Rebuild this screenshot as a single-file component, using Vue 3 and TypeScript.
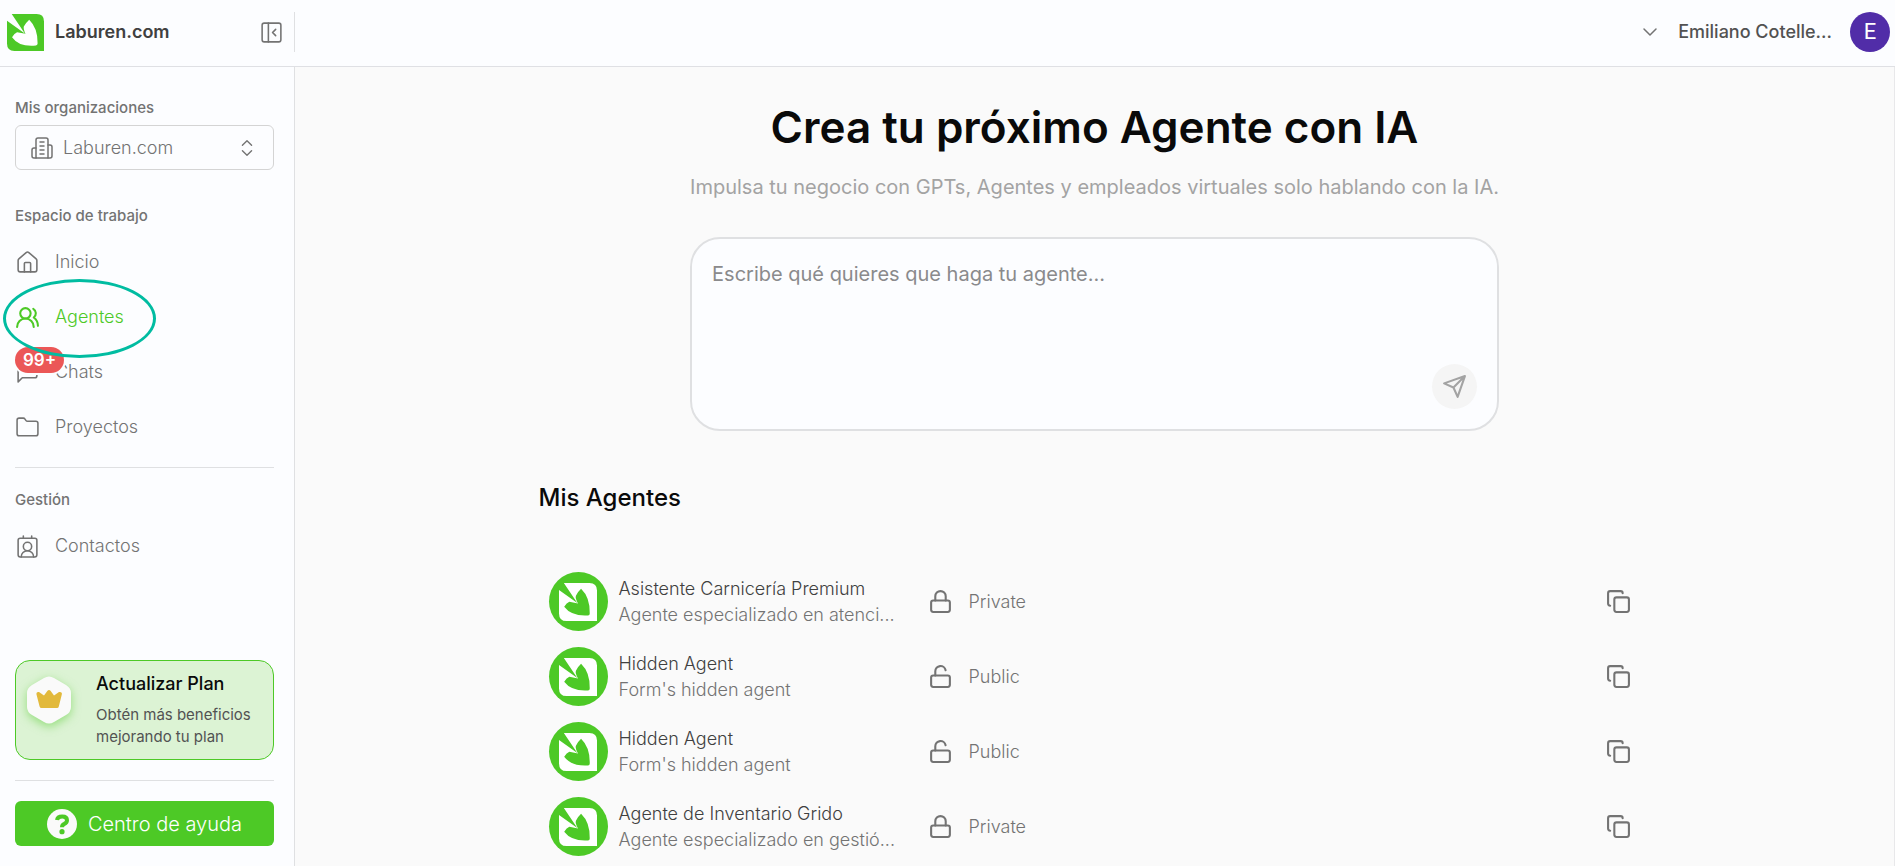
<script setup lang="ts">
import { ref } from 'vue'

interface Shape {
  d: string[]
  circle?: [number, number, number]
  rect?: [number, number, number, number]
}

interface NavItem {
  label: string
  icon: string
  active?: boolean
  badge?: string
}

interface Agent {
  name: string
  description: string
  visibility: 'Private' | 'Public'
}

const icons: Record<string, Shape> = {
  home: {
    d: [
      'M15 21v-8a1 1 0 0 0-1-1h-4a1 1 0 0 0-1 1v8',
      'M3 10a2 2 0 0 1 .709-1.528l7-5.999a2 2 0 0 1 2.582 0l7 5.999A2 2 0 0 1 21 10v9a2 2 0 0 1-2 2H5a2 2 0 0 1-2-2z',
    ],
  },
  users: {
    d: ['M18 21a8 8 0 0 0-16 0', 'M22 20c0-3.37-2-6.5-4-8a5 5 0 0 0-.45-8.3'],
    circle: [10, 8, 5],
  },
  chat: { d: ['M21 15a2 2 0 0 1-2 2H7l-4 4V5a2 2 0 0 1 2-2h14a2 2 0 0 1 2 2z'] },
  folder: {
    d: ['M20 20a2 2 0 0 0 2-2V8a2 2 0 0 0-2-2h-7.9a2 2 0 0 1-1.69-.9L9.6 3.9A2 2 0 0 0 7.93 3H4a2 2 0 0 0-2 2v13a2 2 0 0 0 2 2Z'],
  },
  contact: {
    d: ['M16 2v2', 'M17.915 22a6 6 0 0 0-12 0', 'M8 2v2'],
    circle: [12, 12, 4],
    rect: [3, 4, 18, 18],
  },
}

const workspace: NavItem[] = [
  { label: 'Inicio', icon: 'home' },
  { label: 'Agentes', icon: 'users', active: true },
  { label: 'Chats', icon: 'chat', badge: '99+' },
  { label: 'Proyectos', icon: 'folder' },
]

const management: NavItem[] = [{ label: 'Contactos', icon: 'contact' }]

const agents: Agent[] = [
  { name: 'Asistente Carnicería Premium', description: 'Agente especializado en atenci...', visibility: 'Private' },
  { name: 'Hidden Agent', description: "Form's hidden agent", visibility: 'Public' },
  { name: 'Hidden Agent', description: "Form's hidden agent", visibility: 'Public' },
  { name: 'Agente de Inventario Grido', description: 'Agente especializado en gestió...', visibility: 'Private' },
]

const organization = ref('Laburen.com')
const prompt = ref('')
</script>

<template>
  <div class="shell">
    <header class="topbar">
      <div class="brand">
        <svg class="brand-logo" viewBox="0 0 110 110" aria-hidden="true">
          <path class="logo-green" d="M14 0H88Q110 0 110 22V110H22Q0 110 0 88V20L53 58Z" />
          <path class="logo-white" d="M66 17Q92 42 91 88Q91 93 86 94Q36 99 15 69Q22 57 30 54L55 59Q48 44 50 37Q57 25 66 17Z" />
        </svg>
        <span class="brand-name">Laburen.com</span>
        <button class="icon-button" type="button" aria-label="Contraer menú">
          <svg class="icon" viewBox="0 0 24 24" aria-hidden="true">
            <rect x="3" y="3" width="18" height="18" rx="2" />
            <path d="M9 3v18M16 15l-3-3 3-3" />
          </svg>
        </button>
      </div>
      <button class="account" type="button">
        <svg class="icon account-chevron" viewBox="0 0 24 24" aria-hidden="true"><path d="m6 9 6 6 6-6" /></svg>
        <span class="account-name">Emiliano Cotelle...</span>
        <span class="account-avatar">E</span>
      </button>
    </header>

    <div class="body">
      <aside class="sidebar">
        <label class="section-label" for="organization">Mis organizaciones</label>
        <div class="select-box">
          <svg class="icon select-icon" viewBox="0 0 24 24" aria-hidden="true">
            <path d="M6 22V4a2 2 0 0 1 2-2h8a2 2 0 0 1 2 2v18Z" />
            <path d="M6 12H4a2 2 0 0 0-2 2v6a2 2 0 0 0 2 2h2" />
            <path d="M18 9h2a2 2 0 0 1 2 2v9a2 2 0 0 1-2 2h-2" />
            <path d="M10 6h4M10 10h4M10 14h4M10 18h4" />
          </svg>
          <select id="organization" v-model="organization">
            <option>Laburen.com</option>
          </select>
          <svg class="icon select-arrows" viewBox="0 0 24 24" aria-hidden="true">
            <path d="m7 15 5 5 5-5M7 9l5-5 5 5" />
          </svg>
        </div>

        <p class="section-label workspace-label">Espacio de trabajo</p>
        <nav class="nav" aria-label="Espacio de trabajo">
          <a v-for="item in workspace" :key="item.label" href="#" class="nav-item" :class="{ active: item.active }">
            <svg class="icon" viewBox="0 0 24 24" aria-hidden="true">
              <circle v-if="icons[item.icon].circle" :cx="icons[item.icon].circle![0]" :cy="icons[item.icon].circle![1]" :r="icons[item.icon].circle![2]" />
              <path v-for="d in icons[item.icon].d" :key="d" :d="d" />
            </svg>
            <span>{{ item.label }}</span>
            <span v-if="item.badge" class="badge">{{ item.badge }}</span>
            <span v-if="item.active" class="marker" aria-hidden="true"></span>
          </a>
        </nav>
        <hr class="divider" />

        <p class="section-label management-label">Gestión</p>
        <nav class="nav" aria-label="Gestión">
          <a v-for="item in management" :key="item.label" href="#" class="nav-item">
            <svg class="icon" viewBox="0 0 24 24" aria-hidden="true">
              <rect v-if="icons[item.icon].rect" :x="icons[item.icon].rect![0]" :y="icons[item.icon].rect![1]" :width="icons[item.icon].rect![2]" :height="icons[item.icon].rect![3]" rx="2" />
              <circle v-if="icons[item.icon].circle" :cx="icons[item.icon].circle![0]" :cy="icons[item.icon].circle![1]" :r="icons[item.icon].circle![2]" />
              <path v-for="d in icons[item.icon].d" :key="d" :d="d" />
            </svg>
            <span>{{ item.label }}</span>
          </a>
        </nav>

        <div class="sidebar-foot">
          <a class="upgrade" href="#">
            <svg class="upgrade-icon" viewBox="0 0 44 48" aria-hidden="true">
              <path class="hexagon" d="M17 2Q22-1 27 2L39 9Q44 12 44 17V31Q44 36 39 39L27 46Q22 49 17 46L5 39Q0 36 0 31V17Q0 12 5 9L17 2Z" />
              <path class="crown" d="M9.500 18.500Q9 15.500 12 16L17 19.500L20.500 14.800Q22 13 23.500 14.800L27 19.500L32 16Q35.500 15.500 34.800 18.500L31.800 30.500Q31.500 32 30 32H14.500Q13 32 12.600 30.500Z" />
            </svg>
            <span class="upgrade-text">
              <strong>Actualizar Plan</strong>
              <span>Obtén más beneficios mejorando tu plan</span>
            </span>
          </a>
          <hr class="divider" />
          <button class="help" type="button">
            <svg class="help-icon" viewBox="0 0 30 30" aria-hidden="true">
              <circle class="help-disc" cx="15" cy="15" r="15" />
              <path class="help-hook" d="M10 11Q10.500 7.500 15.200 7.500Q20 7.500 20 11.200Q20 13.500 17.300 14.900Q15 16 15 18.200" />
              <circle class="help-dot" cx="15" cy="22.700" r="2.600" />
            </svg>
            Centro de ayuda
          </button>
        </div>
      </aside>

      <main class="main">
        <section class="hero">
          <h1>Crea tu próximo Agente con IA</h1>
          <p class="subtitle">Impulsa tu negocio con GPTs, Agentes y empleados virtuales solo hablando con la IA.</p>
          <form class="composer" @submit.prevent>
            <textarea v-model="prompt" aria-label="Descripción del agente" placeholder="Escribe qué quieres que haga tu agente..."></textarea>
            <button class="send" type="submit" aria-label="Enviar">
              <svg class="icon bold" viewBox="0 0 24 24" aria-hidden="true">
                <path d="m22 2-7 20-4-9-9-4ZM22 2 11 13" />
              </svg>
            </button>
          </form>
        </section>

        <section class="agents">
          <h2>Mis Agentes</h2>
          <table aria-label="Mis Agentes">
            <colgroup>
              <col class="col-agent" />
              <col class="col-visibility" />
              <col class="col-action" />
            </colgroup>
            <tbody>
              <tr v-for="(agent, index) in agents" :key="index">
                <td>
                  <div class="agent">
                    <span class="agent-avatar">
                      <svg class="agent-logo" viewBox="0 0 110 110" aria-hidden="true">
                        <path class="logo-white" d="M14 0H88Q110 0 110 22V110H22Q0 110 0 88V20L53 58Z" />
                        <path class="logo-green" d="M64 17Q90 42 89 88Q89 93 84 94Q36 97 15 69Q22 57 30 54L55 59Q46 44 49 37Q55 25 64 17Z" />
                      </svg>
                    </span>
                    <div>
                      <div class="agent-name">{{ agent.name }}</div>
                      <div>{{ agent.description }}</div>
                    </div>
                  </div>
                </td>
                <td>
                  <div class="visibility">
                    <svg class="icon bold" viewBox="0 0 24 24" aria-hidden="true">
                      <rect x="3" y="11" width="18" height="11" rx="2" />
                      <path :d="agent.visibility === 'Private' ? 'M7 11V7a5 5 0 0 1 10 0v4' : 'M7 11V7a5 5 0 0 1 9.900-1'" />
                    </svg>
                    <span>{{ agent.visibility }}</span>
                  </div>
                </td>
                <td>
                  <button class="icon-button" type="button" aria-label="Duplicar agente">
                    <svg class="icon bold" viewBox="0 0 24 24" aria-hidden="true">
                      <rect x="8" y="8" width="14" height="14" rx="2" />
                      <path d="M4 16c-1.100 0-2-.9-2-2V4c0-1.100.9-2 2-2h10c1.100 0 2 .9 2 2" />
                    </svg>
                  </button>
                </td>
              </tr>
            </tbody>
          </table>
        </section>
      </main>
    </div>
  </div>
</template>

<style>
body {
  margin: 0;
}
</style>

<style scoped>
.shell {
  display: flex;
  flex-direction: column;
  height: 100vh;
  background: #fafafa;
  color: #737373;
  font-family: Inter, "Liberation Sans", sans-serif;
  font-size: 18px;
  line-height: 26px;
}

.shell * {
  box-sizing: border-box;
}

button,
select,
textarea {
  margin: 0;
  padding: 0;
  border: 0;
  background: none;
  color: inherit;
  font: inherit;
}

button {
  cursor: pointer;
}

h1,
h2,
p {
  margin: 0;
}

a {
  color: inherit;
  text-decoration: none;
}

.icon {
  flex: none;
  width: 25px;
  height: 25px;
  fill: none;
  stroke: currentColor;
  stroke-width: 1.5;
  stroke-linecap: round;
  stroke-linejoin: round;
}

.icon.bold {
  stroke-width: 2;
}

.icon-button {
  display: flex;
}

.logo-green {
  fill: #4dc926;
}

.logo-white {
  fill: #fff;
}

.topbar {
  display: flex;
  flex: none;
  align-items: flex-start;
  justify-content: space-between;
  height: 67px;
  padding: 12px 5px 0 0;
  border-bottom: 1px solid #dfe0e4;
  background: #fcfdff;
}

.brand {
  display: flex;
  align-items: center;
  width: 295px;
  height: 40px;
  padding: 0 10px 0 7px;
  border-right: 1px solid #dfe0e2;
}

.brand-logo {
  width: 37px;
  height: 37px;
}

.brand-name {
  flex: 1;
  margin-left: 11px;
  color: #404040;
  font-weight: 600;
}

.account {
  display: flex;
  align-items: center;
  height: 40px;
}

.account-chevron {
  width: 24px;
  height: 24px;
}

.account-name {
  margin: 0 18px 0 16px;
  color: #525252;
  font-weight: 500;
}

.account-avatar {
  width: 40px;
  height: 40px;
  border-radius: 50%;
  background: #512da8;
  color: #fff;
  font: 22px/40px Roboto, sans-serif;
  text-align: center;
}

.body {
  display: flex;
  flex: 1;
  min-height: 0;
}

.sidebar {
  display: flex;
  flex: none;
  flex-direction: column;
  width: 295px;
  padding: 31px 20px 20px 15px;
  border-right: 1px solid #dfe0e2;
  background: #fcfdff;
}

.section-label {
  font-size: 15px;
  font-weight: 500;
  line-height: 20px;
}

.select-box {
  display: flex;
  position: relative;
  align-items: center;
  height: 45px;
  margin-top: 7px;
}

.select-box select {
  width: 100%;
  height: 100%;
  padding: 0 47px;
  border: 1px solid #d4d4d4;
  border-radius: 6px;
  font-weight: 300;
  appearance: none;
}

.select-icon,
.select-arrows {
  position: absolute;
  pointer-events: none;
}

.select-icon {
  left: 15px;
  width: 24px;
  height: 24px;
}

.select-arrows {
  right: 16px;
  width: 22px;
  height: 22px;
}

.workspace-label {
  margin-top: 36px;
}

.nav {
  display: flex;
  flex-direction: column;
  gap: 15px;
  margin-top: 16px;
}

.nav-item {
  display: flex;
  position: relative;
  align-items: center;
  gap: 15px;
  height: 40px;
  font-weight: 300;
}

.active {
  z-index: 1;
  color: #4dc926;
}

.active .icon {
  stroke-width: 2;
}

.badge {
  position: absolute;
  top: -5px;
  left: 0;
  height: 26px;
  padding: 0 8px;
  border-radius: 13px;
  background: #eb5757;
  box-shadow: 0 0 0 2px #fcfdff;
  color: #fff;
  font-size: 17px;
  font-weight: 600;
}

.marker {
  position: absolute;
  top: -18px;
  left: -12px;
  width: 153px;
  height: 79px;
  border: 3px solid #00bca1;
  border-radius: 50%;
  pointer-events: none;
}

.divider {
  width: 100%;
  height: 1px;
  margin: 20px 0;
  border: 0;
  background: #dfe0e2;
}

.management-label {
  margin-top: 2px;
}

.sidebar-foot {
  margin-top: auto;
}

.upgrade {
  display: flex;
  align-items: flex-start;
  gap: 25px;
  height: 100px;
  padding: 10px 11px;
  border: 1px solid #4dc926;
  border-radius: 15px;
  background: #dcf3d4;
}

.upgrade-icon {
  flex: none;
  width: 44px;
  height: 48px;
  margin-top: 5px;
  overflow: visible;
  filter: drop-shadow(0 3px 5px rgb(77 201 38 / 50%));
}

.hexagon {
  fill: #fafafa;
}

.crown {
  fill: #e2b93b;
}

.upgrade-text {
  display: block;
  color: #525252;
  font-size: 15px;
  line-height: 22px;
}

.upgrade-text > * {
  display: block;
}

.upgrade-text strong {
  margin-bottom: 7px;
  color: #0a0a0a;
  font-size: 18px;
  font-weight: 500;
  line-height: 26px;
}

.help {
  display: flex;
  align-items: center;
  justify-content: center;
  gap: 11px;
  width: 100%;
  height: 45px;
  border-radius: 6px;
  background: #4dc926;
  color: #fff;
  font-size: 20px;
  font-weight: 300;
}

.help-icon {
  width: 30px;
  height: 30px;
}

.help-disc {
  fill: #fafafa;
}

.help-hook {
  fill: none;
  stroke: #4dc926;
  stroke-width: 4;
}

.help-dot {
  fill: #4dc926;
}

.main {
  flex: 1;
  min-width: 0;
  overflow-y: auto;
  border-right: 1px solid #e8e8ea;
  scrollbar-width: none;
}

.hero {
  width: fit-content;
  margin: 0 auto;
  padding-top: 35px;
  text-align: center;
}

h1 {
  color: #0a0a0a;
  font-size: 44px;
  font-weight: 600;
  line-height: 50px;
}

.subtitle {
  margin-top: 20px;
  color: #a3a3a3;
  font-size: 20px;
  line-height: 30px;
}

.composer {
  display: flex;
  align-items: flex-end;
  height: 194px;
  margin-top: 35px;
  padding: 20px;
  border: 2px solid #dfe0e2;
  border-radius: 30px;
  background: #fcfdff;
}

textarea {
  flex: 1;
  align-self: stretch;
  color: #404040;
  font-size: 20px;
  line-height: 30px;
  outline: 0;
  resize: none;
}

textarea::placeholder {
  color: #8a8a8c;
  opacity: 1;
}

.send {
  display: grid;
  width: 45px;
  height: 45px;
  border-radius: 50%;
  background: #f5f5f5;
  color: #a3a3a3;
  place-items: center;
}

.agents {
  max-width: 1112px;
  margin: 0 auto;
  padding-top: 49px;
}

h2 {
  color: #0a0a0a;
  font-size: 24px;
  font-weight: 500;
  line-height: 35px;
}

table {
  width: 100%;
  margin-top: 49px;
  border-collapse: collapse;
  font-weight: 300;
  table-layout: fixed;
}

.col-agent {
  width: 379px;
}

.col-action {
  width: 55px;
}

td {
  height: 75px;
  padding: 0 10px;
}

.agent,
.visibility {
  display: flex;
  align-items: center;
  white-space: nowrap;
}

.agent {
  gap: 11px;
}

.agent-avatar {
  display: grid;
  flex: none;
  width: 59px;
  height: 59px;
  border-radius: 50%;
  background: #4dc926;
  place-items: center;
}

.agent-logo {
  width: 38px;
  height: 38px;
}

.agent-name {
  color: #404040;
}

.visibility {
  gap: 16px;
}
</style>
